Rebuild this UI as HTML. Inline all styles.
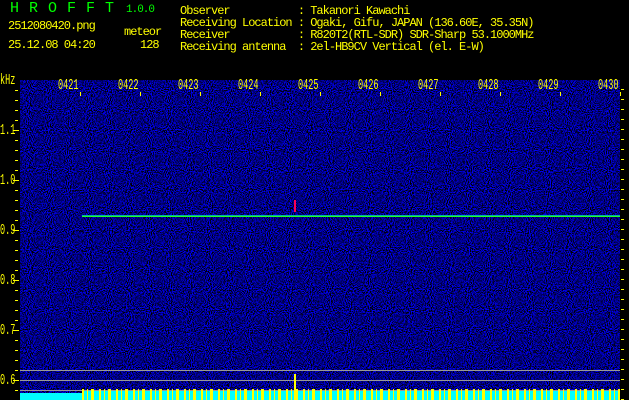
<!DOCTYPE html>
<html><head><meta charset="utf-8"><style>
html,body{margin:0;padding:0;background:#000;width:629px;height:400px;overflow:hidden}
.t{position:absolute;font-family:"Liberation Mono",monospace;font-size:12px;color:#ff0;white-space:pre;line-height:12px;letter-spacing:-1px}
.a{font-size:15px;line-height:15px;letter-spacing:0;transform:scaleX(0.57);transform-origin:0 0}
</style></head><body>
<svg width="629" height="400" style="position:absolute;left:0;top:0">
<defs>
<filter id="n" x="0" y="0" width="100%" height="100%">
<feTurbulence type="fractalNoise" baseFrequency="0.95" numOctaves="1" seed="3"/>
<feColorMatrix type="matrix" values="0 0 0 0 0  0 0 0 0 0  5 0 0 0 -2.2  0 0 0 0 1"/>
</filter>
</defs>
<rect x="20" y="80" width="600" height="320" fill="#000"/>
<rect x="20" y="80" width="600" height="320" filter="url(#n)"/>
<line x1="82" y1="216.5" x2="620" y2="216.5" stroke="#2f2" stroke-width="1"/>
<line x1="82" y1="215.5" x2="620" y2="215.5" stroke="#0aa" stroke-width="1"/>
<rect x="294" y="200" width="2" height="12" fill="#f05"/>
<g stroke="#999" stroke-width="1">
<line x1="20" y1="370.5" x2="620" y2="370.5"/>
<line x1="20" y1="380.5" x2="620" y2="380.5"/>
<line x1="20" y1="390.5" x2="620" y2="390.5"/>
</g>
<rect x="20" y="393" width="62" height="7" fill="#0ff"/>
<rect x="82" y="391" width="538" height="9" fill="#0ff"/>
<g fill="#ff0">
<rect x="294" y="374" width="2" height="26"/>
</g>
<g fill="#ff0">
<rect x="15" y="90" width="3" height="1"/><rect x="15" y="100" width="3" height="1"/><rect x="15" y="110" width="3" height="1"/><rect x="15" y="120" width="3" height="1"/>
<rect x="13" y="130" width="6" height="1"/>
<rect x="15" y="140" width="3" height="1"/><rect x="15" y="150" width="3" height="1"/><rect x="15" y="160" width="3" height="1"/><rect x="15" y="170" width="3" height="1"/>
<rect x="13" y="180" width="6" height="1"/>
<rect x="15" y="190" width="3" height="1"/><rect x="15" y="200" width="3" height="1"/><rect x="15" y="210" width="3" height="1"/><rect x="15" y="220" width="3" height="1"/>
<rect x="13" y="230" width="6" height="1"/>
<rect x="15" y="240" width="3" height="1"/><rect x="15" y="250" width="3" height="1"/><rect x="15" y="260" width="3" height="1"/><rect x="15" y="270" width="3" height="1"/>
<rect x="13" y="280" width="6" height="1"/>
<rect x="15" y="290" width="3" height="1"/><rect x="15" y="300" width="3" height="1"/><rect x="15" y="310" width="3" height="1"/><rect x="15" y="320" width="3" height="1"/>
<rect x="13" y="330" width="6" height="1"/>
<rect x="15" y="340" width="3" height="1"/><rect x="15" y="350" width="3" height="1"/><rect x="15" y="360" width="3" height="1"/><rect x="15" y="370" width="3" height="1"/>
<rect x="13" y="380" width="6" height="1"/>
<rect x="15" y="390" width="3" height="1"/>
<rect x="80" y="92" width="1" height="4"/><rect x="140" y="92" width="1" height="4"/><rect x="200" y="92" width="1" height="4"/><rect x="260" y="92" width="1" height="4"/><rect x="320" y="92" width="1" height="4"/><rect x="380" y="92" width="1" height="4"/><rect x="440" y="92" width="1" height="4"/><rect x="500" y="92" width="1" height="4"/><rect x="560" y="92" width="1" height="4"/><rect x="620" y="92" width="1" height="4"/>
</g>
</svg>
<div style="position:absolute;left:82px;top:389px;width:538px;height:11px;background:repeating-linear-gradient(90deg,#ff0 0 2px,transparent 2px 5px,#ff0 5px 6px,transparent 6px 9px,#ff0 9px 12px,transparent 12px 17px)"></div>
<div style="position:absolute;left:621px;top:80px;width:3px;height:320px;background:repeating-linear-gradient(180deg,transparent 0 9px,#ff0 9px 10px)"></div>
<div class="t" style="left:10px;top:1px;color:#0f0;font-size:15px;line-height:15px;letter-spacing:10px">HROFFT</div>
<div class="t" style="left:126px;top:4px;color:#0f0;font-size:11px">1.0.0</div>
<div class="t" style="left:8px;top:20px">2512080420.png</div>
<div class="t" style="left:124px;top:26px">meteor</div>
<div class="t" style="left:8px;top:39px">25.12.08 04:20</div>
<div class="t" style="left:140px;top:39px">128</div>
<div class="t" style="left:180px;top:5px;line-height:12px">Observer           : Takanori Kawachi
Receiving Location : Ogaki, Gifu, JAPAN (136.60E, 35.35N)
Receiver           : R820T2(RTL-SDR) SDR-Sharp 53.1000MHz
Receiving antenna  : 2el-HB9CV Vertical (el. E-W)</div>
<div class="t a" style="left:0;top:73px">kHz</div>
<div class="t a" style="left:58px;top:78px">0421</div>
<div class="t a" style="left:118px;top:78px">0422</div>
<div class="t a" style="left:178px;top:78px">0423</div>
<div class="t a" style="left:238px;top:78px">0424</div>
<div class="t a" style="left:298px;top:78px">0425</div>
<div class="t a" style="left:358px;top:78px">0426</div>
<div class="t a" style="left:418px;top:78px">0427</div>
<div class="t a" style="left:478px;top:78px">0428</div>
<div class="t a" style="left:538px;top:78px">0429</div>
<div class="t a" style="left:598px;top:78px">0430</div>
<div class="t a" style="left:0;top:123px">1.1</div>
<div class="t a" style="left:0;top:173px">1.0</div>
<div class="t a" style="left:0;top:223px">0.9</div>
<div class="t a" style="left:0;top:273px">0.8</div>
<div class="t a" style="left:0;top:323px">0.7</div>
<div class="t a" style="left:0;top:373px">0.6</div>
</body></html>
